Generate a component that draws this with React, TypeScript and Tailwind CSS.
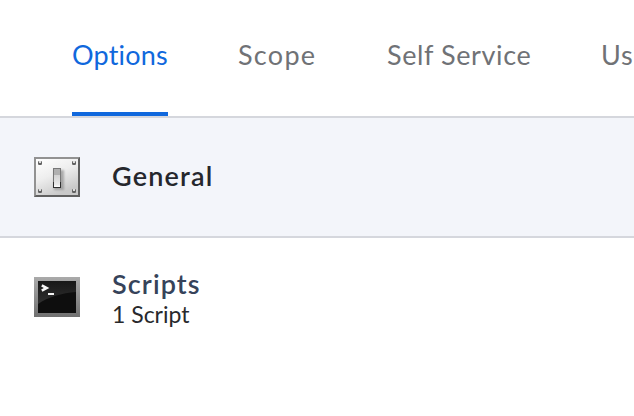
import * as React from "react"

type Tab = {
  label: string
  className: string
}

type Payload = {
  id: string
  title: string
  titleClassName: string
  detail?: string
  icon: React.ReactNode
}

const tabs: Tab[] = [
  { label: "Options", className: "w-24 tracking-[0.2px]" },
  { label: "Scope", className: "w-[79px] tracking-[1.3px]" },
  { label: "Self Service", className: "w-[144px] tracking-[0.6px]" },
  { label: "Us", className: "tracking-[0.8px]" },
]

const GeneralIcon = () => (
  <svg width="46" height="40" viewBox="0 0 46 40" className="shrink-0">
    <defs>
      <linearGradient id="plate" x1="0" y1="0" x2="0.5" y2="1">
        <stop offset="0" stopColor="#ffffff" />
        <stop offset="0.5" stopColor="#eeeeee" />
        <stop offset="1" stopColor="#c9c9c9" />
      </linearGradient>
      <linearGradient id="toggle" x1="0" y1="0" x2="0" y2="1">
        <stop offset="0" stopColor="#d2d2d2" />
        <stop offset="0.8" stopColor="#eaeaea" />
        <stop offset="1" stopColor="#ffffff" />
      </linearGradient>
      <filter id="soft" x="-50%" y="-50%" width="200%" height="200%">
        <feGaussianBlur stdDeviation="1.3" />
      </filter>
    </defs>
    <rect width="46" height="40" fill="#929292" />
    <path d="M46 0V40H0L2 38H44V2Z" fill="#606060" />
    <rect x="2" y="2" width="42" height="36" fill="url(#plate)" />
    <rect x="20" y="13" width="10" height="20" fill="#888888" opacity="0.65" filter="url(#soft)" />
    <rect x="19" y="11" width="8" height="20" fill="#777777" />
    <path d="M19 25h1v5h6v-5h1v6h-8z" fill="#303030" />
    <rect x="20" y="12" width="6" height="6" fill="#b0b0b0" />
    <rect x="20" y="18" width="6" height="12" fill="url(#toggle)" />
    {[4, 38].map((x) =>
      [4, 32].map((y) => (
        <g key={`${x}-${y}`}>
          <rect x={x} y={y} width="4" height="4" rx="1.3" fill="#626262" />
          <rect x={x + 1} y={y} width="2" height="2" fill="#dedede" />
        </g>
      ))
    )}
  </svg>
)

const ScriptsIcon = () => (
  <svg width="46" height="40" viewBox="0 0 46 40" className="shrink-0">
    <defs>
      <linearGradient id="frame" x1="0" y1="0" x2="0" y2="1">
        <stop offset="0" stopColor="#aaaaaa" />
        <stop offset="1" stopColor="#707070" />
      </linearGradient>
      <linearGradient id="gloss" x1="0" y1="0" x2="0" y2="1">
        <stop offset="0" stopColor="#181818" />
        <stop offset="1" stopColor="#303030" />
      </linearGradient>
    </defs>
    <rect width="46" height="40" fill="url(#frame)" />
    <rect x="4" y="4" width="38" height="32" fill="#0e0e0e" />
    <path d="M4 4H42V15C28 16 14 20 4 27Z" fill="url(#gloss)" />
    <path d="M7.8 8.4L12.6 11L7.8 13.6" fill="none" stroke="#f6f6f6" strokeWidth="2.6" />
    <rect x="14" y="16" width="6" height="2" fill="#f3f3f3" />
  </svg>
)

const payloads: Payload[] = [
  {
    id: "general",
    title: "General",
    titleClassName: "pb-1 text-[#25272d] tracking-[1.2px]",
    icon: <GeneralIcon />,
  },
  {
    id: "scripts",
    title: "Scripts",
    titleClassName: "pt-px text-[#36435a] tracking-[1.1px]",
    detail: "1 Script",
    icon: <ScriptsIcon />,
  },
]

const App = () => {
  const [activeTab, setActiveTab] = React.useState("Options")
  const [selected, setSelected] = React.useState("general")

  return (
    <div className="h-screen overflow-hidden bg-white font-['Lato',sans-serif]">
      <nav className="flex h-[118px] gap-[70px] border-b-2 border-[#d5d7dd] pl-[72px]">
        {tabs.map((tab) => (
          <button
            key={tab.label}
            onClick={() => setActiveTab(tab.label)}
            className={`h-[116px] shrink-0 border-b-4 pb-0.5 text-left text-[27px] leading-8 whitespace-nowrap ${
              activeTab === tab.label
                ? "border-[#1068dd] text-[#1068dd]"
                : "border-transparent text-[#707276]"
            } ${tab.className}`}
          >
            {tab.label}
          </button>
        ))}
      </nav>
      <div>
        {payloads.map((payload) => (
          <button
            key={payload.id}
            onClick={() => setSelected(payload.id)}
            className={`flex h-[120px] w-full items-center gap-8 border-b-2 pl-[34px] text-left ${
              selected === payload.id
                ? "border-[#d5d7dd] bg-[#f3f5fa]"
                : "border-transparent bg-white"
            }`}
          >
            {payload.icon}
            <span className="flex flex-col pt-px">
              <span
                className={`text-[27px] leading-8 font-semibold ${payload.titleClassName}`}
              >
                {payload.title}
              </span>
              {payload.detail && (
                <span className="text-[23px] leading-7 text-[#28292c]">
                  {payload.detail}
                </span>
              )}
            </span>
          </button>
        ))}
      </div>
    </div>
  )
}

export default App
